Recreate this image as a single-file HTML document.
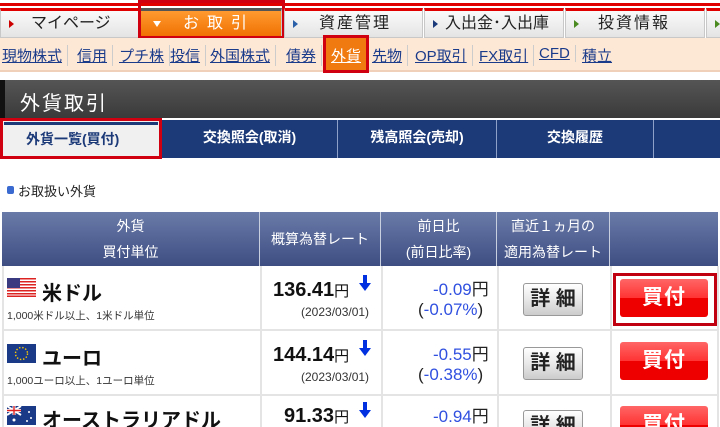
<!DOCTYPE html>
<html><head><meta charset="utf-8"><style>
*{margin:0;padding:0;box-sizing:border-box}
html,body{width:720px;height:427px;overflow:hidden}
body{background:#fff;font-family:"Liberation Sans","Noto Sans CJK JP",sans-serif;position:relative}
.a{position:absolute}
.tab{position:absolute;top:8px;height:30px;background:linear-gradient(#fafafa,#e4e4e4);border:1px solid #c8c8c8;border-top:3px solid #e00000;font-size:16px;color:#222;line-height:26px}
.tab i{position:absolute;left:8px;top:9px;width:0;height:0;border-left:5px solid #c00;border-top:4px solid transparent;border-bottom:4px solid transparent}
.sub{position:absolute;top:45px;font-size:15px;color:#1a3a8a;text-decoration:underline;border-right:1px solid #ccc;padding-right:5px;white-space:nowrap}
.nt{position:absolute;top:120px;height:38px;color:#fff;font-weight:bold;font-size:14px;text-align:center;line-height:34px;border-right:1px solid #8fa0c8}
.th{position:absolute;top:212px;height:54px;background:linear-gradient(#6a7aa8,#3e4e82);color:#fff;font-size:14px;text-align:center;border-right:1px solid #c8d0e0;display:flex;align-items:center;justify-content:center;line-height:26px}
.hl{position:absolute;left:2px;width:716px;height:2px;background:#e4e4e4}
.vl{position:absolute;top:266px;width:2px;height:161px;background:#e4e4e4}
.det{position:absolute;width:60px;height:33px;border:1px solid #999;border-radius:3px;background:linear-gradient(#fff,#e8e8e8 50%,#ccc);font-size:20px;font-weight:bold;text-align:center;line-height:31px;color:#222}
.buy{position:absolute;width:88px;height:38px;border-radius:3px;background:linear-gradient(#f66,#f33 50%,#e00 50%,#e00);color:#fff;font-size:21px;font-weight:bold;text-align:center;line-height:38px;letter-spacing:1px}
.rate{position:absolute;font-size:20px;font-weight:bold;color:#111}
.rate small{font-size:15px;font-weight:normal}
.arr{position:absolute}
.dt{position:absolute;font-size:12px;color:#333}
.chg{position:absolute;font-size:17px;color:#3050e0;white-space:nowrap}
.chg b{font-weight:normal;color:#222}
.nm{position:absolute;left:42px;font-size:20px;font-weight:bold;color:#111}
.un{position:absolute;left:7px;font-size:10.5px;color:#333}
</style></head><body>
<div class="a" style="left:0;top:3px;width:720px;height:3px;background:#e00000"></div>
<div class="tab" style="left:0;width:140px"><i></i><span style="margin-left:30px">マイページ</span></div>
<div class="tab" style="left:140px;width:142px;background:linear-gradient(#ff9a30,#f07000);border-top:3px solid #555;color:#fff;letter-spacing:8px"><span style="position:absolute;left:12px;top:10px;border-top:6px solid #fff;border-left:4px solid transparent;border-right:4px solid transparent;width:0;height:0"></span><span style="margin-left:42px">お取引</span></div>
<div class="a" style="left:138px;top:0;width:147px;height:39px;border:3px solid #d00010"></div>
<div class="tab" style="left:284px;width:139px"><i style="border-left-color:#2a60a8"></i><span style="margin-left:34px;letter-spacing:2px">資産管理</span></div>
<div class="tab" style="left:424px;width:140px"><i style="border-left-color:#1a3a7a"></i><span style="margin-left:20px">入出金･入出庫</span></div>
<div class="tab" style="left:565px;width:140px"><i style="border-left-color:#4a8a20"></i><span style="margin-left:32px;letter-spacing:2px">投資情報</span></div>
<div class="tab" style="left:706px;width:20px"><i style="border-left-color:#4a8a20"></i></div>
<div class="a" style="left:0;top:38px;width:720px;height:34px;background:#fde8d6;border-bottom:2px solid #f0d0b8"></div>
<span class="sub" style="left:2px">現物株式</span><span class="sub" style="left:77px">信用</span><span class="sub" style="left:119px">プチ株</span><span class="sub" style="left:170px">投信</span><span class="sub" style="left:210px">外国株式</span><span class="sub" style="left:286px">債券</span>
<div class="a" style="left:323px;top:35px;width:46px;height:38px;border:3px solid #d00010;background:#f07a10"></div>
<span class="a" style="left:331px;top:45px;font-size:15px;color:#fff;text-decoration:underline">外貨</span>
<span class="sub" style="left:372px">先物</span><span class="sub" style="left:415px">OP取引</span><span class="sub" style="left:479px">FX取引</span><span class="sub" style="left:539px">CFD</span><span class="sub" style="left:582px;border:none">積立</span>
<div class="a" style="left:0;top:80px;width:720px;height:38px;background:linear-gradient(#555,#3a3a3a);border-left:5px solid #111"></div>
<span class="a" style="left:20px;top:87px;font-size:20px;color:#fff;letter-spacing:2px">外貨取引</span>
<div class="a" style="left:0;top:120px;width:720px;height:38px;background:#1c3a78"></div>
<div class="a" style="left:0;top:118px;width:162px;height:41px;border:3px solid #d00010;background:#f0f0f0"></div>
<div class="a" style="left:4px;top:122px;width:154px;height:3px;background:#1c3a78"></div>
<span class="a" style="left:26px;top:129px;font-size:14px;font-weight:bold;color:#1c3a78">外貨一覧(買付)</span>
<div class="nt" style="left:162px;width:176px">交換照会(取消)</div>
<div class="nt" style="left:338px;width:159px">残高照会(売却)</div>
<div class="nt" style="left:497px;width:157px">交換履歴</div>
<div class="a" style="left:7px;top:186px;width:7px;height:8px;background:#3a6ad0;border-radius:2px"></div>
<span class="a" style="left:18px;top:181px;font-size:13px;color:#222">お取扱い外貨</span>
<div class="th" style="left:2px;width:258px">外貨<br>買付単位</div>
<div class="th" style="left:260px;width:121px">概算為替レート</div>
<div class="th" style="left:381px;width:116px">前日比<br>(前日比率)</div>
<div class="th" style="left:497px;width:113px">直近１ヵ月の<br>適用為替レート</div>
<div class="th" style="left:610px;width:108px;border:none"></div>
<div class="hl" style="top:329px"></div><div class="hl" style="top:394px"></div>
<div class="vl" style="left:2px"></div><div class="vl" style="left:260px"></div><div class="vl" style="left:381px"></div><div class="vl" style="left:497px"></div><div class="vl" style="left:610px"></div><div class="vl" style="left:717px"></div>
<svg class="a" style="left:7px;top:278px" width="29" height="19"><rect width="29" height="19" fill="#fff"/><g fill="#d22"><rect y="0" width="29" height="1.5"/><rect y="3" width="29" height="1.5"/><rect y="6" width="29" height="1.5"/><rect y="9" width="29" height="1.5"/><rect y="12" width="29" height="1.5"/><rect y="15" width="29" height="1.5"/><rect y="17.5" width="29" height="1.5"/></g><rect width="13" height="10" fill="#3a3a80"/></svg>
<svg class="a" style="left:7px;top:344px" width="29" height="19"><rect width="29" height="19" fill="#1a3a88"/><circle cx="14.5" cy="9.5" r="6" fill="none" stroke="#fc0" stroke-width="1.4" stroke-dasharray="1.4 1.8"/></svg>
<svg class="a" style="left:7px;top:406px" width="29" height="19"><rect width="29" height="19" fill="#1a3a88"/><path d="M0 0L14 9M14 0L0 9" stroke="#fff" stroke-width="2"/><path d="M7 0V9M0 4.5H14" stroke="#fff" stroke-width="3"/><path d="M7 0V9M0 4.5H14" stroke="#d22" stroke-width="1.4"/><circle cx="22" cy="6" r="1" fill="#fff"/><circle cx="24" cy="12" r="1" fill="#fff"/><circle cx="7" cy="14" r="1.5" fill="#fff"/><circle cx="20" cy="15" r="1" fill="#fff"/></svg>
<span class="nm" style="top:277px">米ドル</span><span class="un" style="top:308px">1,000米ドル以上、1米ドル単位</span>
<span class="nm" style="top:342px">ユーロ</span><span class="un" style="top:373px">1,000ユーロ以上、1ユーロ単位</span>
<span class="nm" style="top:404px">オーストラリアドル</span>
<span class="rate" style="left:273px;top:279px">136.41<small>円</small></span>
<span class="rate" style="left:273px;top:344px">144.14<small>円</small></span>
<span class="rate" style="left:284px;top:405px">91.33<small>円</small></span>
<svg class="arr" style="left:359px;top:275px" width="12" height="16"><path d="M4 0h4v8h4L6 16 0 8h4z" fill="#0030e0"/></svg>
<svg class="arr" style="left:359px;top:340px" width="12" height="16"><path d="M4 0h4v8h4L6 16 0 8h4z" fill="#0030e0"/></svg>
<svg class="arr" style="left:359px;top:402px" width="12" height="16"><path d="M4 0h4v8h4L6 16 0 8h4z" fill="#0030e0"/></svg>
<span class="dt" style="left:301px;top:305px">(2023/03/01)</span>
<span class="dt" style="left:301px;top:370px">(2023/03/01)</span>
<span class="chg" style="left:433px;top:275px">-0.09<b>円</b></span><span class="chg" style="left:418px;top:300px"><b>(</b>-0.07%<b>)</b></span>
<span class="chg" style="left:433px;top:340px">-0.55<b>円</b></span><span class="chg" style="left:418px;top:365px"><b>(</b>-0.38%<b>)</b></span>
<span class="chg" style="left:433px;top:402px">-0.94<b>円</b></span>
<div class="det" style="left:523px;top:283px">詳 細</div>
<div class="det" style="left:523px;top:347px">詳 細</div>
<div class="det" style="left:523px;top:410px">詳 細</div>
<div class="a" style="left:613px;top:273px;width:104px;height:53px;border:3px solid #c00010"></div>
<div class="buy" style="left:620px;top:279px">買付</div>
<div class="buy" style="left:620px;top:342px">買付</div>
<div class="buy" style="left:620px;top:406px">買付</div>
</body></html>
